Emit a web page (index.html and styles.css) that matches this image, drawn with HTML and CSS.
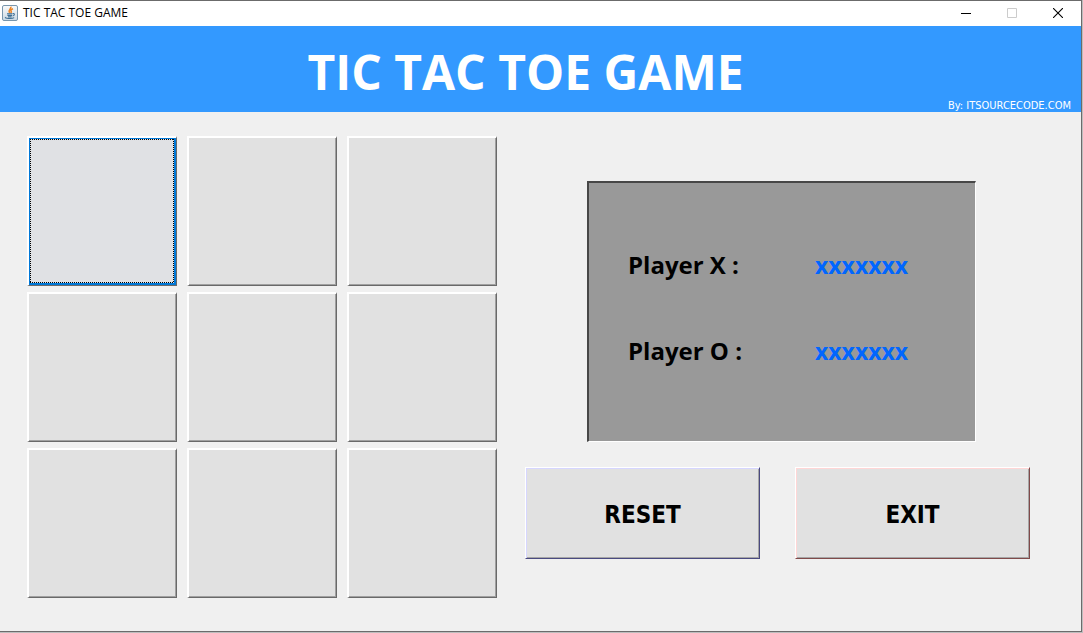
FILE: index.html
```html
<!DOCTYPE html>
<html lang="en">
<head>
<meta charset="utf-8">
<meta name="viewport" content="width=device-width, initial-scale=1">
<title>TIC TAC TOE GAME</title>
<link rel="stylesheet" href="styles.css">
</head>
<body>
<div class="window">
  <div class="titlebar">
    <svg class="app-icon" width="16" height="16" viewBox="0 0 16 16" aria-hidden="true">
      <defs><linearGradient id="tile" x1="0" y1="0" x2="0" y2="1"><stop offset="0" stop-color="#fafafa"/><stop offset="1" stop-color="#c9d8e4"/></linearGradient></defs>
      <rect x=".5" y=".5" width="15" height="15" rx="1.5" fill="url(#tile)" stroke="#7896ad"/>
      <path d="M8.8 1.6C9.8 3.8 5.4 4.4 7.6 8M11 3.8C8.6 4.8 8.4 5.6 9.2 6.4 9.6 7 9.2 7.6 8.6 8" fill="none" stroke="#ee8424" stroke-width="1.5"/>
      <path d="M5 8.7h5.4M5.4 10.4h4.6M6 11.9h3.6M10.8 8.6c2.2-.4 2 1.8-.2 2.4M3.6 12.2c-1.6 1.4 6.6 1.8 8.6.4" fill="none" stroke="#3e6e93" stroke-width="1.1"/>
    </svg>
    <span class="caption">TIC TAC TOE GAME</span>
    <div class="controls">
      <button class="control" type="button" aria-label="Minimize"><svg width="10" height="10" viewBox="0 0 10 10"><path d="M0 5.5h10" stroke="#000"/></svg></button>
      <button class="control" type="button" aria-label="Maximize" disabled><svg width="10" height="10" viewBox="0 0 10 10"><path d="M.5.5h9v9h-9z" fill="none" stroke="#ccc"/></svg></button>
      <button class="control" type="button" aria-label="Close"><svg width="10" height="10" viewBox="0 0 10 10"><path d="M0 0l10 10M10 0L0 10" stroke="#000" stroke-width="1.1"/></svg></button>
    </div>
  </div>
  <header class="banner">
    <h1 class="heading">TIC TAC TOE GAME</h1>
    <p class="credit">By: ITSOURCECODE.COM</p>
  </header>
  <main class="game">
    <div class="board">
      <button class="cell cell-focused" type="button" aria-label="Row 1, column 1"><span class="focus-ring"></span></button>
      <button class="cell" type="button" aria-label="Row 1, column 2"></button>
      <button class="cell" type="button" aria-label="Row 1, column 3"></button>
      <button class="cell" type="button" aria-label="Row 2, column 1"></button>
      <button class="cell" type="button" aria-label="Row 2, column 2"></button>
      <button class="cell" type="button" aria-label="Row 2, column 3"></button>
      <button class="cell" type="button" aria-label="Row 3, column 1"></button>
      <button class="cell" type="button" aria-label="Row 3, column 2"></button>
      <button class="cell" type="button" aria-label="Row 3, column 3"></button>
    </div>
    <div class="side">
      <dl class="scores">
        <dt class="player">Player X :</dt><dd class="score">xxxxxxx</dd>
        <dt class="player">Player O :</dt><dd class="score">xxxxxxx</dd>
      </dl>
      <div class="actions">
        <button class="action reset" type="button">RESET</button>
        <button class="action exit" type="button">EXIT</button>
      </div>
    </div>
  </main>
</div>
</body>
</html>
```
FILE: styles.css
```css
* { box-sizing: border-box; }
body {
  margin: 0;
  background: #bdbdbd;
  font-family: "Open Sans", "Noto Sans", sans-serif;
}
.window {
  display: flex;
  flex-direction: column;
  min-height: calc(100vh - 1px);
  margin: 0 1px 1px 0;
  background: #f0f0f0;
  border: solid #6b6b6b;
  border-width: 1px 1px 1px 0;
}
.titlebar {
  display: flex;
  align-items: center;
  height: 25px;
  padding: 0 0 1px 2px;
  background: #fff;
}
.caption {
  margin-left: 5px;
  font-size: 12px;
  line-height: 16px;
}
.controls { display: flex; margin-left: auto; }
.control {
  display: flex;
  align-items: center;
  justify-content: center;
  width: 46px;
  height: 24px;
  padding: 0;
  background: none;
  border: 0;
}
.banner {
  display: flex;
  flex-direction: column;
  height: 86px;
  background: #3399ff;
  color: #fff;
}
.heading {
  margin: 14px 30px 0 0;
  font-size: 48px;
  line-height: 64px;
  text-align: center;
}
.credit {
  margin: -5px 10px 0 0;
  font-family: "DejaVu Sans Condensed", "DejaVu Sans", sans-serif;
  font-size: 11px;
  line-height: 14px;
  text-align: right;
}
.game {
  display: flex;
  gap: 28px;
  padding: 24px 51px 32px 27px;
}
.board {
  display: grid;
  flex: 470 1 0;
  grid-template-columns: repeat(3, 1fr);
  gap: 6px 10px;
}
.cell {
  height: 150px;
  padding: 0;
  background: #e1e1e1;
  border: solid #696969;
  border-width: 2px 1px 1px 2px;
  border-top-color: #fff;
  border-left-color: #fff;
  box-shadow: inset -1px -1px #a0a0a0;
}
.cell-focused {
  padding: 1px 2px 2px 1px;
  background: #e0e1e4;
  box-shadow: inset 1px 1px #0078d7, inset -2px -2px #0078d7;
}
.focus-ring {
  display: block;
  height: 100%;
  background:
    repeating-linear-gradient(90deg, #000 0 1px, transparent 1px 2px) 0 0 / 100% 1px no-repeat,
    repeating-linear-gradient(90deg, #000 0 1px, transparent 1px 2px) 0 100% / 100% 1px no-repeat,
    repeating-linear-gradient(#000 0 1px, transparent 1px 2px) 0 0 / 1px 100% no-repeat,
    repeating-linear-gradient(#000 0 1px, transparent 1px 2px) 100% 0 / 1px 100% no-repeat;
}
.side {
  display: flex;
  flex: 505 1 0;
  flex-direction: column;
  gap: 25px;
  padding-top: 45px;
}
.scores {
  display: grid;
  grid-template-columns: 187px 1fr;
  row-gap: 52px;
  align-content: center;
  align-items: baseline;
  height: 261px;
  margin: 0 54px 0 62px;
  padding: 0 0 9px 39px;
  background: #999;
  border: solid #474747;
  border-width: 2px 1px 1px 2px;
  border-right-color: #fff;
  border-bottom-color: #fff;
  font-size: 24px;
  font-weight: 700;
  line-height: 34px;
}
.score {
  margin: 0;
  color: #0066ff;
  font-size: 23px;
}
.actions { display: grid; grid-template-columns: 1fr 1fr; gap: 35px; }
.action {
  height: 92px;
  padding: 4px 0 0;
  background: #e1e1e1;
  border: 1px solid #fff;
  color: #000;
  font-family: "DejaVu Sans Condensed", "DejaVu Sans", sans-serif;
  font-size: 24px;
  font-weight: 700;
}
.reset {
  border-right-color: #4a4a80;
  border-bottom-color: #4a4a80;
  box-shadow: inset 1px 1px #d6d6ff, inset -1px -1px #a6a6a6;
}
.exit {
  border-right-color: #804a4a;
  border-bottom-color: #804a4a;
  box-shadow: inset 1px 1px #ffd6d6, inset -1px -1px #a6a6a6;
}
```
